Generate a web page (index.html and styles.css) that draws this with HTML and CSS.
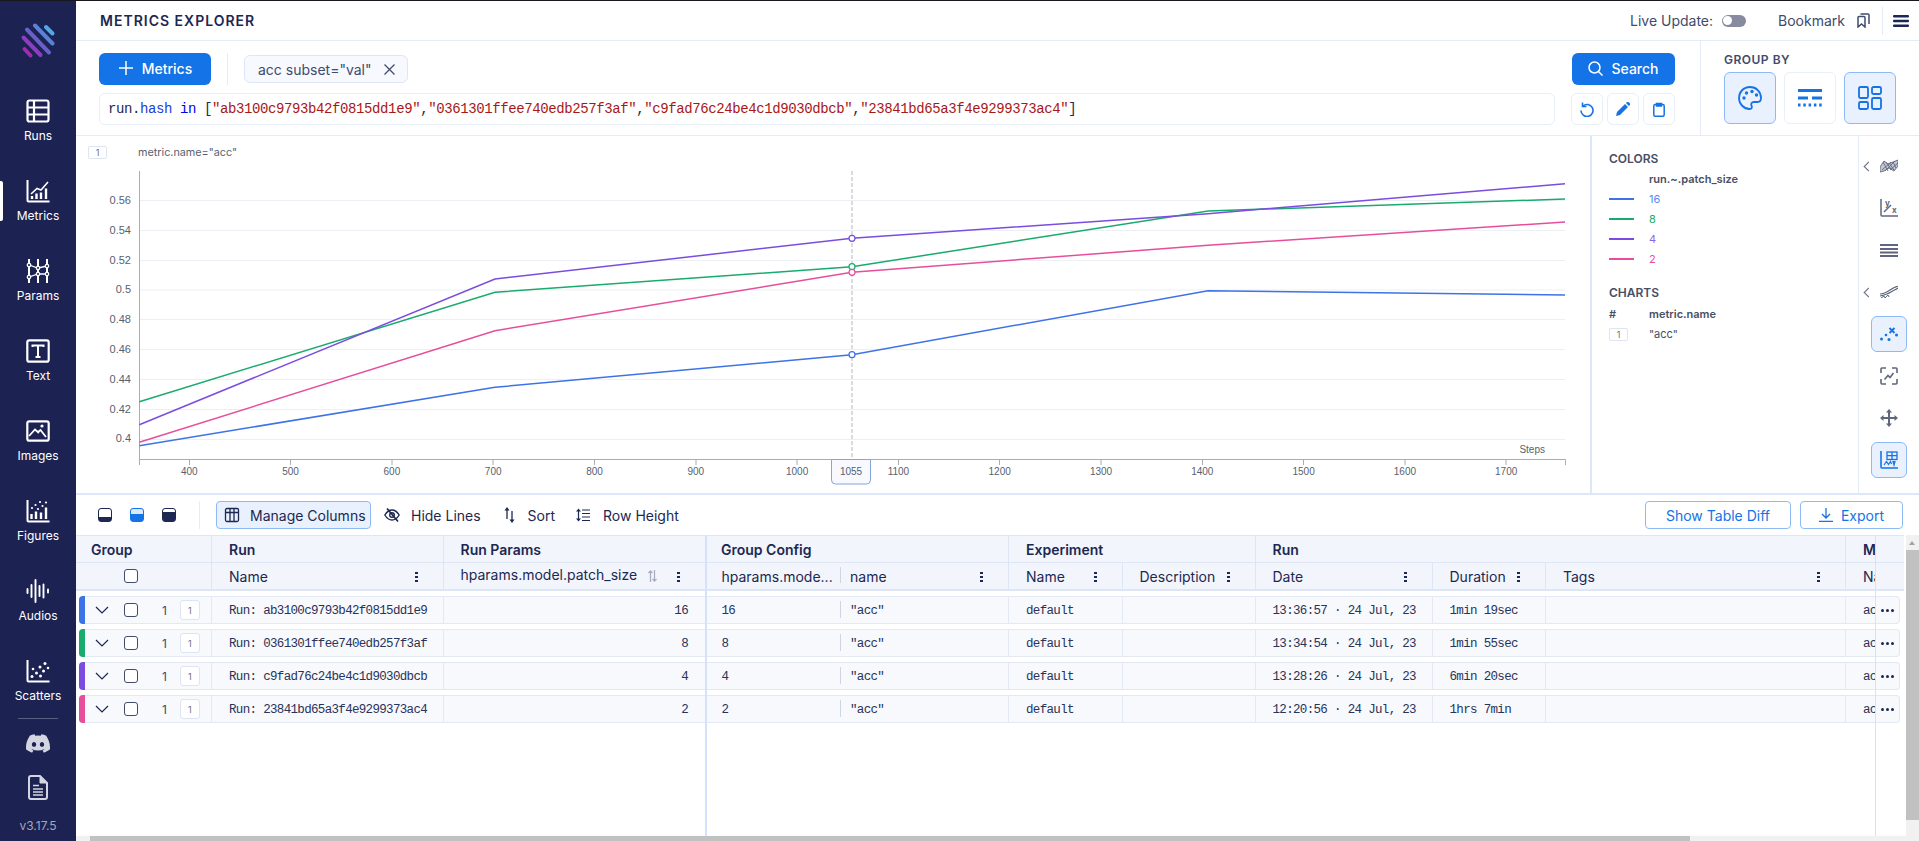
FILE: index.html
```html
<!DOCTYPE html>
<html lang="en">

<head>
  <meta charset="UTF-8">
  <title>Metrics Explorer</title>
  <link rel="stylesheet" href="styles.css">
</head>

<body>
  <div class="app">
    <nav class="sidebar">
      <svg class="logo" width="36" height="36" viewBox="0 0 36 36" fill="none" stroke-width="4" stroke-linecap="round">
        <path d="M26 4L32.500 10.500" stroke="#4fa8e8" />
        <path d="M15 2.500L32.500 20.500" stroke="#5a80d8" />
        <path d="M7 6.500L29 29.500" stroke="#6a5fc8" />
        <path d="M3.500 14.500L20.500 32" stroke="#8a3fc0" />
        <path d="M4.500 26L10.500 32.500" stroke="#a02ab0" />
      </svg>

      <a class="nav-item">
        <svg width="24" height="24" viewBox="0 0 24 24" fill="none" stroke="#fff" stroke-width="2.200">
          <rect x="1.500" y="1.500" width="21" height="21" rx="2" />
          <path d="M1.500 8.500H22.500M1.500 15.500H22.500M8 1.500V22.500" />
        </svg>
        <span>Runs</span>
      </a>
      <a class="nav-item active">
        <svg width="24" height="24" viewBox="0 0 24 24" fill="none" stroke="#fff" stroke-width="2">
          <path d="M1.500 1V21.500a1 1 0 0 0 1 1H23.500" />
          <path d="M5 15L11 9.500L15 11L22 3" stroke-width="1.600" />
          <path d="M6 20V17M10.500 20V14.500M15 20V13.500M20 20V9.500" stroke-width="2.400" />
        </svg>
        <span>Metrics</span>
      </a>
      <a class="nav-item">
        <svg width="24" height="24" viewBox="0 0 24 24" fill="none" stroke="#fff" stroke-width="1.800">
          <path d="M3 0V24M12 0V24M21 0V24" stroke-width="2" />
          <path d="M3 6L12 9L21 7M3 18L12 15L21 15" stroke-width="1.300" />
          <g fill="#1c2252" stroke-width="1.300">
            <circle cx="3" cy="6" r="1.700" />
            <circle cx="12" cy="9" r="1.700" />
            <circle cx="21" cy="7" r="1.700" />
            <circle cx="3" cy="18" r="1.700" />
            <circle cx="12" cy="15" r="1.700" />
            <circle cx="21" cy="15" r="1.700" />
          </g>
        </svg>
        <span>Params</span>
      </a>
      <a class="nav-item">
        <svg width="24" height="24" viewBox="0 0 24 24" fill="none" stroke="#fff">
          <rect x="1.300" y="1.300" width="21.400" height="21.400" rx="2" stroke-width="2.200" />
          <path d="M6.500 8V6.500H17.500V8M12 6.500V18M9.500 18H14.500" stroke-width="2" />
        </svg>
        <span>Text</span>
      </a>
      <a class="nav-item">
        <svg width="24" height="24" viewBox="0 0 24 24" fill="none" stroke="#fff">
          <rect x="1.300" y="2.300" width="21.400" height="19.400" rx="2" stroke-width="2.200" />
          <path d="M3 17L9 10.500L13 14M12 13L14.500 11L20 18" stroke-width="1.800" />
          <circle cx="16" cy="7" r="1.600" fill="#fff" stroke="none" />
        </svg>
        <span>Images</span>
      </a>
      <a class="nav-item">
        <svg width="24" height="24" viewBox="0 0 24 24" fill="none" stroke="#fff" stroke-width="2">
          <path d="M1.500 1V21.500a1 1 0 0 0 1 1H23.500" />
          <path d="M5.500 20V15M10 20V12.500M15 20V13.500M20 20V8.500" stroke-width="2.400" />
          <g fill="#fff" stroke="none">
            <circle cx="6" cy="9" r="1.100" />
            <circle cx="9.500" cy="6" r="1.100" />
            <circle cx="12" cy="10" r="1.100" />
            <circle cx="14" cy="3" r="1.100" />
            <circle cx="16.500" cy="7" r="1.100" />
            <circle cx="20" cy="3.500" r="1.100" />
          </g>
        </svg>
        <span>Figures</span>
      </a>
      <a class="nav-item">
        <svg width="24" height="24" viewBox="0 0 24 24" fill="none" stroke="#fff" stroke-width="1.900" stroke-linecap="round">
          <path d="M1.500 10V14M5.500 6V18M9.500 1V23M13.500 7V17M17.500 5.500V18.500M22 10.500V13.500" />
        </svg>
        <span>Audios</span>
      </a>
      <a class="nav-item">
        <svg width="24" height="24" viewBox="0 0 24 24" fill="none" stroke="#fff" stroke-width="2">
          <path d="M1.500 1V21.500a1 1 0 0 0 1 1H23.500" />
          <g fill="#fff" stroke="none">
            <circle cx="6" cy="17.500" r="1.500" />
            <circle cx="7" cy="10" r="1.300" />
            <circle cx="10.500" cy="14" r="1.500" />
            <circle cx="14" cy="8" r="1.500" />
            <circle cx="14.500" cy="17" r="1.500" />
            <circle cx="17.500" cy="12" r="1.500" />
            <circle cx="19" cy="4.500" r="1.500" />
            <circle cx="22" cy="9" r="1.300" />
          </g>
        </svg>
        <span>Scatters</span>
      </a>

      <div class="nav-line"></div>
      <svg class="nav-discord" width="24" height="19" viewBox="0 0 24 19" fill="#d3d6e0">
        <path transform="translate(0 -2.500)" d="M20.317 4.370a19.791 19.791 0 0 0-4.885-1.515.074.074 0 0 0-.079.037c-.21.375-.444.864-.608 1.250a18.270 18.270 0 0 0-5.487 0 12.640 12.640 0 0 0-.617-1.250.077.077 0 0 0-.079-.037A19.736 19.736 0 0 0 3.677 4.370a.070.070 0 0 0-.032.027C.533 9.046-.32 13.580.099 18.057a.082.082 0 0 0 .031.057 19.900 19.900 0 0 0 5.993 3.030.078.078 0 0 0 .084-.028 14.090 14.090 0 0 0 1.226-1.994.076.076 0 0 0-.041-.106 13.107 13.107 0 0 1-1.872-.892.077.077 0 0 1-.008-.128 10.200 10.200 0 0 0 .372-.292.074.074 0 0 1 .077-.01c3.928 1.793 8.180 1.793 12.062 0a.074.074 0 0 1 .078.01c.12.098.246.198.373.292a.077.077 0 0 1-.006.127 12.299 12.299 0 0 1-1.873.892.077.077 0 0 0-.041.107c.36.698.772 1.362 1.225 1.993a.076.076 0 0 0 .084.028 19.839 19.839 0 0 0 6.002-3.030.077.077 0 0 0 .032-.054c.5-5.177-.838-9.674-3.549-13.660a.061.061 0 0 0-.031-.03zM8.020 15.330c-1.183 0-2.157-1.085-2.157-2.419 0-1.333.956-2.419 2.157-2.419 1.210 0 2.176 1.096 2.157 2.420 0 1.333-.956 2.418-2.157 2.418zm7.975 0c-1.183 0-2.157-1.085-2.157-2.419 0-1.333.955-2.419 2.157-2.419 1.210 0 2.176 1.096 2.157 2.420 0 1.333-.946 2.418-2.157 2.418z" />
      </svg>
      <svg class="nav-doc" width="20" height="25" viewBox="0 0 20 25" fill="none" stroke="#d3d6e0">
        <path d="M3 1H12L19 8V22a2 2 0 0 1-2 2H3a2 2 0 0 1-2-2V3a2 2 0 0 1 2-2z" stroke-width="2" />
        <path d="M12 1V8H19" fill="#d3d6e0" stroke-width="1" />
        <path d="M5 10.500H11M5 14H15M5 17H15M5 20H15" stroke-width="1.500" />
      </svg>
      <span class="version">v3.17.5</span>
    </nav>

    <main class="main">
      <header class="topbar">
        <h1 class="page-title">Metrics Explorer</h1>
        <div class="topbar-right">
          <span class="live-label">Live Update:</span>
          <span class="toggle"><i></i></span>
          <span class="bookmark">Bookmark</span>
          <svg class="bookmark-icon" width="14" height="15" viewBox="0 0 14 15" fill="none" stroke="#414b6d" stroke-width="1.500">
            <path d="M2 14V4.500a1 1 0 0 1 1-1H8a1 1 0 0 1 1 1V14L5.500 11z" />
            <path d="M4.500 1H12a1 1 0 0 1 1 1V11" />
          </svg>
          <span class="topbar-line"></span>
          <svg width="16" height="12" viewBox="0 0 16 12" fill="#1c2852">
            <rect width="16" height="2.500" rx="1" />
            <rect y="4.700" width="16" height="2.500" rx="1" />
            <rect y="9.500" width="16" height="2.500" rx="1" />
          </svg>
        </div>
      </header>

      <section class="search-section">
        <div class="search-left">
          <div class="search-row">
            <button class="btn-primary metrics-btn">
              <svg width="16" height="16" viewBox="0 0 16 16" stroke="#fff" stroke-width="1.500">
                <path d="M8 1V15M1 8H15" />
              </svg>
              Metrics
            </button>
            <span class="search-line"></span>
            <span class="chip">acc subset="val"
              <svg width="11" height="11" viewBox="0 0 11 11" stroke="#414b6d" stroke-width="1.300">
                <path d="M.5 .5L10.500 10.500M10.500 .5L.5 10.500" />
              </svg>
            </span>
            <button class="btn-primary search-btn">
              <svg width="15" height="15" viewBox="0 0 15 15" fill="none" stroke="#fff" stroke-width="1.500">
                <circle cx="6.500" cy="6.500" r="5.500" />
                <path d="M10.500 10.500L14.500 14.500" />
              </svg>
              Search
            </button>
          </div>
          <div class="search-row">
            <div class="query"><code><span class="q-id">run</span>.<span class="q-prop">hash</span> <span class="q-kw">in</span> [<span class="q-str">"ab3100c9793b42f0815dd1e9"</span>,<span class="q-str">"0361301ffee740edb257f3af"</span>,<span class="q-str">"c9fad76c24be4c1d9030dbcb"</span>,<span class="q-str">"23841bd65a3f4e9299373ac4"</span>]</code></div>
            <div class="query-actions">
              <button class="icon-btn">
                <svg width="14" height="15" viewBox="0 0 14 15" fill="none" stroke="#1473e6" stroke-width="1.600">
                  <path d="M3 4A6 6 0 1 1 1 8.500" />
                  <path d="M2.500 .5V4.500H6.500" />
                </svg>
              </button>
              <button class="icon-btn">
                <svg width="14" height="14" viewBox="0 0 14 14" fill="#1473e6">
                  <path d="M0 14L1 10L9 2L12 5L4 13zM10 1L11 0a1 1 0 0 1 1.400 0L14 1.600a1 1 0 0 1 0 1.400L13 4z" />
                </svg>
              </button>
              <button class="icon-btn">
                <svg width="12" height="15" viewBox="0 0 12 15" fill="none" stroke="#1473e6" stroke-width="1.500">
                  <rect x=".8" y="2.500" width="10.400" height="11.700" rx="1.500" />
                  <path d="M3.500 1.500H8.500V4H3.500z" fill="#1473e6" />
                </svg>
              </button>
            </div>
          </div>
        </div>
        <div class="group-by">
          <h3 class="group-title">Group by</h3>
          <div class="group-btns">
            <button class="group-btn active">
              <svg width="24" height="24" viewBox="0 0 24 24" fill="none" stroke="#1473e6" stroke-width="1.800">
                <path d="M12 1C5.500 1 1 6 1 12s5 11 10.500 11c2.500 0 2.800-2 2-3.500-.8-1.700 0-3.500 2.500-3.500h3.500c2 0 3.500-1.500 3.500-4C23 5.500 18 1 12 1z" />
                <g fill="#1473e6" stroke="none">
                  <circle cx="6" cy="12" r="1.700" />
                  <circle cx="8.500" cy="7" r="1.700" />
                  <circle cx="14" cy="5.500" r="1.700" />
                  <circle cx="18.500" cy="9" r="1.700" />
                </g>
              </svg>
            </button>
            <button class="group-btn">
              <svg width="24" height="18" viewBox="0 0 24 18" fill="none" stroke="#1473e6">
                <path d="M0 1.500H24" stroke-width="3" />
                <path d="M0 9H10M14 9H24" stroke-width="3" />
                <path d="M0 16H24" stroke-width="3" stroke-dasharray="2.500 2.800" />
              </svg>
            </button>
            <button class="group-btn active">
              <svg width="24" height="24" viewBox="0 0 24 24" fill="none" stroke="#1473e6" stroke-width="1.800">
                <rect x="1" y="1" width="9" height="11" rx="1.500" />
                <rect x="14" y="1" width="9" height="7" rx="1.500" />
                <rect x="1" y="16" width="9" height="7" rx="1.500" />
                <rect x="14" y="12" width="9" height="11" rx="1.500" />
              </svg>
            </button>
          </div>
        </div>
      </section>

      <section class="chart-section">
        <div class="chart-box">
          <svg class="chart" width="1514" height="357" viewBox="0 0 1514 357">
            <rect class="tag-box" x="12.500" y="10.500" width="18" height="12" rx="1.500" />
            <text class="tag-text" x="21.500" y="20" text-anchor="middle">1</text>
            <text class="chart-title" x="62" y="20">metric.name="acc"</text>

            <g class="grid">
              <path d="M63 64.500H1489M63 94.500H1489M63 124.500H1489M63 154H1489M63 183.500H1489M63 213.500H1489M63 243.500H1489M63 273.500H1489M63 303.500H1489" />
            </g>
            <path class="axis" d="M63.500 35V323.500H1489.500V329M63.500 323.500V329" />
            <path class="axis" d="M113.500 323V329M214.500 323V329M316 323V329M417 323V329M518.500 323V329M620 323V329M721 323V329M822.500 323V329M923.500 323V329M1025 323V329M1126.500 323V329M1227.500 323V329M1329 323V329M1430 323V329" />

            <g class="y-labels" text-anchor="end">
              <text x="55" y="68">0.56</text>
              <text x="55" y="98">0.54</text>
              <text x="55" y="128">0.52</text>
              <text x="55" y="157">0.5</text>
              <text x="55" y="187">0.48</text>
              <text x="55" y="217">0.46</text>
              <text x="55" y="247">0.44</text>
              <text x="55" y="277">0.42</text>
              <text x="55" y="306">0.4</text>
            </g>
            <g class="x-labels" text-anchor="middle">
              <text x="113.300" y="339">400</text>
              <text x="214.600" y="339">500</text>
              <text x="315.900" y="339">600</text>
              <text x="417.200" y="339">700</text>
              <text x="518.500" y="339">800</text>
              <text x="619.800" y="339">900</text>
              <text x="721.100" y="339">1000</text>
              <text x="822.400" y="339">1100</text>
              <text x="923.700" y="339">1200</text>
              <text x="1025" y="339">1300</text>
              <text x="1126.300" y="339">1400</text>
              <text x="1227.600" y="339">1500</text>
              <text x="1328.900" y="339">1600</text>
              <text x="1430.200" y="339">1700</text>
            </g>
            <text class="x-labels" x="1469" y="317" text-anchor="end">Steps</text>

            <g class="lines">
              <polyline stroke="#3e72e7" points="63.300,309.700 419,251.300 776,218.700 1132,154.700 1489,159" />
              <polyline stroke="#18ab6d" points="63.300,265.700 419,156.300 776,130.700 1132,75 1489,63" />
              <polyline stroke="#7a4ce0" points="63.300,288.700 419,143 776,102.300 1132,77.700 1489,47.700" />
              <polyline stroke="#e64e9c" points="63.300,306.300 419,194.700 776,136.300 1132,109.300 1489,86" />
            </g>

            <path class="hover-line" d="M776 35V323" />
            <g class="dots">
              <circle cx="776" cy="218.700" r="3" stroke="#3e72e7" />
              <circle cx="776" cy="130.700" r="3" stroke="#18ab6d" />
              <circle cx="776" cy="102.300" r="3" stroke="#7a4ce0" />
              <circle cx="776" cy="136.300" r="3" stroke="#e64e9c" />
            </g>

            <path class="hover-chip" d="M755.500 323.500H794.500V344a4 4 0 0 1-4 4H759.500a4 4 0 0 1-4-4z" />
            <text class="x-labels" x="775" y="339" text-anchor="middle">1055</text>
          </svg>
        </div>

        <aside class="legend">
          <h4 class="legend-title">Colors</h4>
          <div class="legend-head">run.~.patch_size</div>
          <div class="legend-row c-blue"><i></i>16</div>
          <div class="legend-row c-green"><i></i>8</div>
          <div class="legend-row c-purple"><i></i>4</div>
          <div class="legend-row c-pink"><i></i>2</div>
          <h4 class="legend-title charts-title">Charts</h4>
          <div class="legend-charts"><b>#</b><b>metric.name</b></div>
          <div class="legend-charts"><span class="tag">1</span><span class="legend-val">"acc"</span></div>
        </aside>

        <div class="controls">
          <div class="control has-arrow">
            <svg width="18" height="14" viewBox="0 0 18 14" fill="none" stroke="#5f667d" stroke-width=".9">
              <path d="M0 8L4 2L8 5L13 3L18 1V7L14 12L9 9L4 12L0 13z" fill="#c3c6d2" />
              <path d="M3 3L8 12M6 3L11 10M9 4L14 11M13 3L16 9M15 2L5 12M11 3L2 11M18 4L10 11" />
            </svg>
          </div>
          <div class="control">
            <svg width="18" height="18" viewBox="0 0 18 18" fill="none" stroke="#5f667d" stroke-width="1.500">
              <path d="M1 0V16a1 1 0 0 0 1 1H18" />
              <path d="M4 13L11 6" />
              <text class="axis-letter" x="5" y="7">y</text>
              <text class="axis-letter" x="12" y="14">x</text>
            </svg>
          </div>
          <div class="control">
            <svg width="18" height="14" viewBox="0 0 18 14" stroke="#5f667d" stroke-width="2.200">
              <path d="M0 2H18M0 6H18M0 9.500H18M0 13H18" />
            </svg>
          </div>
          <div class="control has-arrow">
            <svg width="18" height="12" viewBox="0 0 18 12" fill="none" stroke="#5f667d" stroke-width="1.200">
              <path d="M0 8C4 8 7 6 10 4S15 1 18 0" />
              <path d="M0 10C5 9 8 8 11 6S15 4 18 2" />
              <path d="M1 12L4 10L5 12L8 9L9 11" stroke-width="1" />
            </svg>
          </div>
          <div class="control active">
            <svg width="18" height="14" viewBox="0 0 18 14" fill="#1473e6">
              <circle cx="1.500" cy="12" r="1.500" />
              <circle cx="9" cy="12.500" r="1.500" />
              <circle cx="6" cy="8" r="1.300" />
              <circle cx="16.500" cy="8" r="1.500" />
              <path d="M9.500 1L14.500 6M14.500 1L9.500 6" stroke="#1473e6" stroke-width="1.800" />
            </svg>
          </div>
          <div class="control">
            <svg width="18" height="18" viewBox="0 0 18 18" fill="none" stroke="#5f667d" stroke-width="1.600">
              <path d="M1 6V2a1 1 0 0 1 1-1H6M12 1H16a1 1 0 0 1 1 1V6M17 12V16a1 1 0 0 1-1 1H12M6 17H2a1 1 0 0 1-1-1V12" />
              <path d="M4.500 12.500L8 8.500L10 10.500L13.500 6" />
            </svg>
          </div>
          <div class="control">
            <svg width="18" height="18" viewBox="0 0 18 18" fill="#5f667d" stroke="#5f667d" stroke-width="2">
              <path d="M9 2V16M2 9H16" />
              <path d="M9 0L12 3.500H6zM9 18L12 14.500H6zM0 9L3.500 6V12zM18 9L14.500 6V12z" stroke="none" />
            </svg>
          </div>
          <div class="control active">
            <svg width="18" height="18" viewBox="0 0 18 18" fill="none" stroke="#1473e6" stroke-width="1.300">
              <path d="M1 0V16a1 1 0 0 0 1 1H18" stroke-width="1.600" />
              <rect x="7" y="1" width="10" height="7.500" />
              <path d="M7 4.700H17M12 1V8.500" />
              <path d="M4 14L6.500 10.500L8.500 13.500L10.500 10.500L11.500 13M13 10.500L15 10.500L14 14z" stroke-width="1.200" />
            </svg>
          </div>
        </div>
      </section>

      <div class="table-toolbar">
        <div class="view-btns">
          <span class="view-icon view-low"></span>
          <span class="view-icon view-mid"></span>
          <span class="view-icon view-high"></span>
        </div>
        <span class="toolbar-line"></span>
        <button class="tool-btn active manage-btn">
          <svg width="16" height="16" viewBox="0 0 16 16" fill="none" stroke="#1c2852" stroke-width="1.300">
            <rect x="1.500" y="1.500" width="13" height="13" rx="1.500" />
            <path d="M1.500 5.500H14.500M6 1.500V14.500M10 1.500V14.500" />
          </svg>
          Manage Columns
        </button>
        <button class="tool-btn hide-btn">
          <svg width="16" height="16" viewBox="0 0 16 16" fill="none" stroke="#1c2852" stroke-width="1.400">
            <path d="M.8 8C3 4.500 5.500 3 8 3s5 1.500 7.200 5C13 11.500 10.500 13 8 13S3 11.500 .8 8z" />
            <circle cx="8" cy="8" r="2.300" />
            <path d="M3 1.500L14 14.500" stroke-width="1.700" />
          </svg>
          Hide Lines
        </button>
        <button class="tool-btn sort-btn">
          <svg width="11" height="16" viewBox="0 0 11 16" fill="#1c2852" stroke="#1c2852" stroke-width="1.300">
            <path d="M3 3V12M8 4V14" />
            <path d="M3 0L5.500 3.500H.5zM8 16L10.500 12.500H5.500z" stroke="none" />
          </svg>
          Sort
        </button>
        <button class="tool-btn height-btn">
          <svg width="14" height="14" viewBox="0 0 14 14" fill="#1c2852" stroke="#1c2852" stroke-width="1.200">
            <path d="M2.500 3V11M6 2H14M6 5.500H14M6 9H14M6 12.500H14" />
            <path d="M2.500 .5L5 3.500H0zM2.500 13.500L5 10.500H0z" stroke="none" />
          </svg>
          Row Height
        </button>
        <button class="outline-btn diff-btn">Show Table Diff</button>
        <button class="outline-btn export-btn">
          <svg width="14" height="14" viewBox="0 0 14 14" fill="none" stroke="#1473e6" stroke-width="1.300">
            <path d="M7 0V9.500M3 6L7 10L11 6M0 13.300H14" />
          </svg>
          Export
        </button>
      </div>

      <div class="table-wrap">
        <div class="thead">
          <div class="thead-row thead-groups">
            <div class="th w-group">Group</div>
            <div class="th w-name">Run</div>
            <div class="th w-patch">Run Params</div>
            <div class="th w-config">Group Config</div>
            <div class="th w-experiment">Experiment</div>
            <div class="th w-runinfo">Run</div>
            <div class="th w-metric"><span>Metric</span></div>
          </div>
          <div class="thead-row thead-cols">
            <div class="tc w-group"><span class="check head-check"></span></div>
            <div class="tc w-name"><span class="tc-label">Name</span><i class="dots-v"></i></div>
            <div class="tc w-patch">
              <span class="tc-label patch-label">hparams.model.patch_size</span>
              <svg class="sort-icon" width="9" height="12" viewBox="0 0 9 12" fill="none" stroke="#a8aebd" stroke-width="1.300">
                <path d="M2.500 12V1M.5 3L2.500 1L4.500 3M6.500 0V11M4.500 9L6.500 11L8.500 9" />
              </svg>
              <i class="dots-v"></i>
            </div>
            <div class="tc w-hp"><span class="tc-label">hparams.mode...</span></div>
            <div class="tc w-gname"><span class="short-line"></span><span class="tc-label">name</span><i class="dots-v"></i></div>
            <div class="tc w-expname"><span class="tc-label">Name</span><i class="dots-v"></i></div>
            <div class="tc w-desc"><span class="tc-label">Description</span><i class="dots-v"></i></div>
            <div class="tc w-date"><span class="tc-label">Date</span><i class="dots-v"></i></div>
            <div class="tc w-duration"><span class="tc-label">Duration</span><i class="dots-v"></i></div>
            <div class="tc w-tags"><span class="tc-label">Tags</span><i class="dots-v"></i></div>
            <div class="tc w-metric"><span>Name</span></div>
          </div>
        </div>

        <div class="tbody">
          <div class="row">
            <div class="td first-cell"><i class="bar bg-blue"></i><svg class="chevron" width="14" height="8" viewBox="0 0 14 8" fill="none" stroke="#1c2852" stroke-width="1.200"><path d="M1 1L7 7L13 1" /></svg><span class="check"></span><span class="count">1</span><span class="tag tag-big">1</span></div>
            <div class="td rw-name">Run: ab3100c9793b42f0815dd1e9</div>
            <div class="td w-patch num">16</div>
            <div class="td w-hp">16</div>
            <div class="td w-gname"><span class="short-line"></span>"acc"</div>
            <div class="td w-expname">default</div>
            <div class="td w-desc"></div>
            <div class="td w-date">13:36:57 · 24 Jul, 23</div>
            <div class="td w-duration">1min 19sec</div>
            <div class="td w-tags"></div>
            <div class="td rw-metric"><span>acc</span></div>
            <div class="more"><i></i><i></i><i></i></div>
          </div>
          <div class="row">
            <div class="td first-cell"><i class="bar bg-green"></i><svg class="chevron" width="14" height="8" viewBox="0 0 14 8" fill="none" stroke="#1c2852" stroke-width="1.200"><path d="M1 1L7 7L13 1" /></svg><span class="check"></span><span class="count">1</span><span class="tag tag-big">1</span></div>
            <div class="td rw-name">Run: 0361301ffee740edb257f3af</div>
            <div class="td w-patch num">8</div>
            <div class="td w-hp">8</div>
            <div class="td w-gname"><span class="short-line"></span>"acc"</div>
            <div class="td w-expname">default</div>
            <div class="td w-desc"></div>
            <div class="td w-date">13:34:54 · 24 Jul, 23</div>
            <div class="td w-duration">1min 55sec</div>
            <div class="td w-tags"></div>
            <div class="td rw-metric"><span>acc</span></div>
            <div class="more"><i></i><i></i><i></i></div>
          </div>
          <div class="row">
            <div class="td first-cell"><i class="bar bg-purple"></i><svg class="chevron" width="14" height="8" viewBox="0 0 14 8" fill="none" stroke="#1c2852" stroke-width="1.200"><path d="M1 1L7 7L13 1" /></svg><span class="check"></span><span class="count">1</span><span class="tag tag-big">1</span></div>
            <div class="td rw-name">Run: c9fad76c24be4c1d9030dbcb</div>
            <div class="td w-patch num">4</div>
            <div class="td w-hp">4</div>
            <div class="td w-gname"><span class="short-line"></span>"acc"</div>
            <div class="td w-expname">default</div>
            <div class="td w-desc"></div>
            <div class="td w-date">13:28:26 · 24 Jul, 23</div>
            <div class="td w-duration">6min 20sec</div>
            <div class="td w-tags"></div>
            <div class="td rw-metric"><span>acc</span></div>
            <div class="more"><i></i><i></i><i></i></div>
          </div>
          <div class="row">
            <div class="td first-cell"><i class="bar bg-pink"></i><svg class="chevron" width="14" height="8" viewBox="0 0 14 8" fill="none" stroke="#1c2852" stroke-width="1.200"><path d="M1 1L7 7L13 1" /></svg><span class="check"></span><span class="count">1</span><span class="tag tag-big">1</span></div>
            <div class="td rw-name">Run: 23841bd65a3f4e9299373ac4</div>
            <div class="td w-patch num">2</div>
            <div class="td w-hp">2</div>
            <div class="td w-gname"><span class="short-line"></span>"acc"</div>
            <div class="td w-expname">default</div>
            <div class="td w-desc"></div>
            <div class="td w-date">12:20:56 · 24 Jul, 23</div>
            <div class="td w-duration">1hrs 7min</div>
            <div class="td w-tags"></div>
            <div class="td rw-metric"><span>acc</span></div>
            <div class="more"><i></i><i></i><i></i></div>
          </div>
        </div>

        <span class="pin-line pin-left"></span>
        <span class="pin-line pin-right"></span>
        <div class="scroll-v"><i></i></div>
        <div class="scroll-h"><i></i></div>
      </div>
    </main>
  </div>
</body>

</html>
```

FILE: styles.css
```css
* {
  box-sizing: border-box;
}

html,
body {
  margin: 0;
  height: 841px;
  overflow: hidden;
}

body {
  border-top: 1px solid #16181d;
  font-family: "Inter", "Liberation Sans", sans-serif;
  color: #1c2852;
  background: #fff;
}

button {
  font-family: inherit;
  cursor: pointer;
}

.app {
  display: flex;
  height: 840px;
}

/* sidebar */
.sidebar {
  width: 76px;
  flex: none;
  background: #1c2252;
  display: flex;
  flex-direction: column;
  align-items: center;
  padding-top: 22px;
}

.logo {
  margin-bottom: 40px;
}

.nav-item {
  position: relative;
  width: 100%;
  height: 44px;
  margin-bottom: 36px;
  display: flex;
  flex-direction: column;
  align-items: center;
  gap: 5px;
  color: #fff;
  font-size: 12px;
  line-height: 15px;
}

.nav-item.active::before {
  content: "";
  position: absolute;
  left: 0;
  top: 2px;
  width: 3px;
  height: 40px;
  background: #fff;
  border-radius: 0 2px 2px 0;
}

.nav-line {
  width: 40px;
  height: 1px;
  flex: none;
  background: #5b6082;
  margin-top: -21px;
}

.nav-discord {
  margin-top: 15px;
}

.nav-doc {
  margin-top: 22px;
}

.version {
  margin-top: 18px;
  font-size: 12px;
  color: #a3a7bb;
}

/* top bar */
.main {
  flex: 1;
  min-width: 0;
  display: flex;
  flex-direction: column;
}

.topbar {
  height: 40px;
  flex: none;
  display: flex;
  align-items: center;
  justify-content: space-between;
  padding: 0 10px 0 24px;
  border-bottom: 1px solid #e4ecf9;
}

.page-title {
  margin: 0;
  font-size: 14px;
  font-weight: 600;
  letter-spacing: 1px;
  text-transform: uppercase;
  color: #1c2852;
}

.topbar-right {
  display: flex;
  align-items: center;
  font-size: 14px;
  color: #414b6d;
}

.toggle {
  width: 24px;
  height: 12px;
  margin-left: 9px;
  border-radius: 6px;
  background: #868b9f;
  display: flex;
  align-items: center;
  padding-left: 1px;
}

.toggle i {
  width: 9px;
  height: 9px;
  border-radius: 50%;
  background: #fff;
}

.bookmark {
  margin-left: 32px;
  margin-top: -1px;
}

.bookmark-icon {
  margin-left: 11px;
}

.topbar-line {
  width: 1px;
  height: 28px;
  margin: 0 10px 0 12px;
  background: #e4ecf9;
}

/* search */
.search-section {
  height: 95px;
  flex: none;
  display: flex;
  border-bottom: 1px solid #e4ecf9;
}

.search-left {
  width: 1624px;
  padding: 12px 25px 0 23px;
  display: flex;
  flex-direction: column;
  gap: 8px;
}

.search-row {
  display: flex;
  align-items: center;
}

.btn-primary {
  height: 32px;
  padding: 0 0 2px;
  border: 0;
  border-radius: 6px;
  background: #1473e6;
  color: #fff;
  font-size: 14px;
  font-weight: 500;
  display: flex;
  align-items: center;
  justify-content: center;
  gap: 8px;
}

.metrics-btn {
  width: 112px;
}

.search-line {
  width: 1px;
  height: 32px;
  margin: 0 16px;
  background: #e4ecf9;
}

.chip {
  height: 28px;
  width: 164px;
  padding: 0 12px 0 13px;
  display: flex;
  align-items: center;
  justify-content: space-between;
  border: 1px solid #dde7f8;
  border-radius: 6px;
  background: #f7f9fe;
  font-size: 14px;
  color: #414b6d;
}

.search-btn {
  width: 103px;
  margin-left: auto;
}

.query {
  flex: 1;
  height: 32px;
  margin-right: 16px;
  padding-left: 8px;
  display: flex;
  align-items: center;
  border: 1px solid #e8eff9;
  border-radius: 6px;
}

.query code {
  font-family: "Liberation Mono", monospace;
  font-size: 14px;
  letter-spacing: -0.4px;
  white-space: pre;
  color: #1c2852;
}

.q-prop {
  color: #1a40d8;
}

.q-kw {
  color: #0000f0;
}

.q-str {
  color: #a81818;
}

.query-actions {
  display: flex;
  gap: 4px;
}

.icon-btn {
  width: 32px;
  height: 32px;
  padding: 0;
  border: 1px solid #e8eff9;
  border-radius: 6px;
  background: #fff;
  display: flex;
  align-items: center;
  justify-content: center;
}

.group-by {
  flex: 1;
  border-left: 1px solid #e4ecf9;
  padding: 12px 0 0 23px;
}

.group-title {
  margin: 0 0 5px;
  font-size: 12px;
  line-height: 14px;
  font-weight: 600;
  letter-spacing: 0.5px;
  text-transform: uppercase;
  color: #414b6d;
}

.group-btns {
  display: flex;
  gap: 8px;
}

.group-btn {
  width: 52px;
  height: 52px;
  padding: 0;
  border: 1px solid #e8eff9;
  border-radius: 6px;
  background: #fff;
  display: flex;
  align-items: center;
  justify-content: center;
}

.group-btn.active {
  background: #e8f1fd;
  border-color: #8dbaf5;
}

/* chart */
.chart-section {
  height: 359px;
  flex: none;
  display: flex;
  border-bottom: 2px solid #dce8fa;
}

.chart-box {
  width: 1516px;
  flex: none;
  border-right: 2px solid #dce8fa;
}

.chart {
  display: block;
  font-family: "Inter", sans-serif;
}

.tag-box {
  fill: #fff;
  stroke: #dde5f3;
}

.tag-text {
  font-size: 9px;
  fill: #6a7086;
}

.chart-title {
  font-size: 10.800px;
  fill: #585f70;
}

.grid path {
  stroke: #eceff4;
  fill: none;
}

.axis {
  stroke: #a9acb8;
  fill: none;
}

.y-labels text,
.x-labels text,
text.x-labels {
  font-family: "Liberation Sans", sans-serif;
  font-size: 10px;
  fill: #585f70;
}

.y-labels text {
  font-size: 11px;
}

.lines polyline {
  fill: none;
  stroke-width: 1.500;
}

.hover-line {
  stroke: #b5b8bf;
  stroke-dasharray: 4 2;
  fill: none;
}

.dots circle {
  fill: #fff;
  stroke-width: 1.200;
}

.hover-chip {
  fill: #f7f9fe;
  stroke: #84a6dc;
}

.legend {
  width: 267px;
  flex: none;
  border-right: 1px solid #e4ecf9;
  padding: 15px 0 0 17px;
  font-size: 11px;
  color: #414b6d;
}

.legend-title {
  margin: 0;
  font-size: 12px;
  line-height: 16px;
  font-weight: 600;
  text-transform: uppercase;
  color: #484e63;
}

.legend-head {
  height: 20px;
  margin: 2px 0 0 40px;
  font-weight: 600;
  line-height: 20px;
  color: #484e63;
}

.legend-row {
  height: 20px;
  display: flex;
  align-items: center;
  gap: 15px;
}

.legend-row i {
  width: 25px;
  height: 2px;
}

.c-blue {
  color: #5b8af0;
}

.c-green {
  color: #18ab6d;
}

.c-purple {
  color: #8e63ea;
}

.c-pink {
  color: #e64e9c;
}

.c-blue i,
.bg-blue {
  background: #3e72e7;
}

.c-green i,
.bg-green {
  background: #18ab6d;
}

.c-purple i,
.bg-purple {
  background: #7a4ce0;
}

.c-pink i,
.bg-pink {
  background: #e64e9c;
}

.charts-title {
  margin-top: 16px;
}

.legend-charts {
  height: 20px;
  margin-top: 3px;
  display: flex;
  align-items: center;
  color: #484e63;
}

.legend-charts:last-child {
  margin-top: 0;
}

.legend-charts > :first-child {
  width: 40px;
}

.legend-charts b {
  font-weight: 600;
}

.legend-val {
  margin-left: 21px;
}

.tag {
  width: 19px !important;
  height: 13px;
  display: flex;
  align-items: center;
  justify-content: center;
  border: 1px solid #dde5f3;
  border-radius: 2px;
  font-size: 9px;
  color: #6a7086;
}

.controls {
  flex: 1;
  padding-top: 12px;
  display: flex;
  flex-direction: column;
  align-items: center;
  gap: 6px;
}

.control {
  position: relative;
  width: 36px;
  height: 36px;
  flex: none;
  display: flex;
  align-items: center;
  justify-content: center;
  border: 1px solid transparent;
  border-radius: 6px;
}

.control.active {
  background: #e8f1fd;
  border-color: #8dbaf5;
}

.control.has-arrow::before {
  content: "";
  position: absolute;
  left: -7px;
  top: 14px;
  width: 6px;
  height: 6px;
  border-left: 1.300px solid #5f667d;
  border-bottom: 1.300px solid #5f667d;
  transform: rotate(45deg);
}

.axis-letter {
  font-size: 8px;
  font-weight: 700;
  fill: #5f667d;
  stroke: none;
}

/* table toolbar */
.table-toolbar {
  height: 40px;
  flex: none;
  display: flex;
  align-items: center;
  padding: 0 16px 0 22px;
}

.view-btns {
  display: flex;
  gap: 18px;
}

.view-icon {
  width: 14px;
  height: 14px;
  border: 1.500px solid #1c2852;
  border-radius: 3px;
  background: #fff;
}

.view-low {
  background: linear-gradient(#fff 70%, #1c2852 70%);
}

.view-mid {
  border-color: #1473e6;
  background: linear-gradient(#dbe9fb 45%, #1473e6 45%);
}

.view-high {
  background: linear-gradient(#fff 25%, #1c2852 25%);
}

.toolbar-line {
  width: 1px;
  height: 28px;
  margin: 0 16px 0 23px;
  background: #e4ecf9;
}

.tool-btn {
  height: 28px;
  padding: 0 7px;
  display: flex;
  align-items: center;
  gap: 11px;
  border: 1px solid transparent;
  border-radius: 4px;
  background: none;
  font-size: 14px;
  font-weight: 400;
  white-space: nowrap;
  color: #1c2852;
}

.tool-btn.active {
  background: #e8f1fd;
  border-color: #8dbaf5;
}

.manage-btn {
  width: 155px;
  gap: 10px;
  padding-right: 0;
}

.hide-btn {
  margin-left: 5px;
}

.sort-btn {
  margin-left: 7px;
  gap: 13px;
}

.height-btn {
  margin-left: 5px;
  gap: 13px;
}

.outline-btn {
  height: 28px;
  border: 1px solid #8dbaf5;
  border-radius: 4px;
  background: #fff;
  color: #1473e6;
  font-size: 14px;
  display: flex;
  align-items: center;
  justify-content: center;
  gap: 8px;
}

.diff-btn {
  width: 146px;
  margin-left: auto;
  margin-right: 9px;
}

.export-btn {
  width: 103px;
}

/* table */
.table-wrap {
  position: relative;
  flex: 1;
  overflow: hidden;
  font-size: 14px;
}

.thead {
  width: 1828px;
  background: #f2f5fb;
  border-top: 1px solid #dfe6f3;
}

.thead-row {
  display: flex;
  border-bottom: 1px solid #dfe6f3;
}

.thead-groups {
  height: 27px;
}

.thead-cols {
  height: 28px;
  border-bottom-width: 2px;
}

.th,
.tc {
  flex: none;
  display: flex;
  align-items: center;
  padding-left: 17px;
  border-right: 1px solid #dfe6f3;
  white-space: nowrap;
}

.th {
  font-weight: 600;
}

.tc {
  position: relative;
  padding-right: 10px;
  justify-content: space-between;
  font-weight: 400;
}

.th.w-group {
  padding-left: 15px;
}

.th.w-config {
  padding-left: 15px;
}

.w-group {
  width: 136px;
}

.w-name {
  width: 231.500px;
}

.w-patch {
  width: 262.500px;
}

.w-config {
  width: 303px;
}

.w-experiment {
  width: 246.500px;
}

.w-runinfo {
  width: 590.500px;
}

.w-hp {
  width: 134px;
  border-right: 0 !important;
}

.w-gname {
  width: 169px;
  padding-left: 10px !important;
  position: relative;
}

.w-expname {
  width: 113.500px;
}

.w-desc {
  width: 133px;
}

.w-date {
  width: 177px;
}

.w-duration {
  width: 113.500px;
}

.w-tags {
  width: 300px;
}

.w-metric {
  width: 58px;
  border-right: 0;
}

.w-metric span {
  display: block;
  width: 12px;
  overflow: hidden;
}

.tc.w-hp {
  padding-left: 15.500px;
}

.tc.w-group {
  justify-content: flex-start;
  padding-left: 48px;
}

.patch-label {
  margin-top: -4px;
}

.sort-icon {
  margin-left: auto;
  margin-right: 20px;
}

.short-line {
  position: absolute;
  left: 0;
  top: 4px;
  bottom: 6px;
  width: 1px;
  background: #cfd6e3;
}

.dots-v {
  width: 3px;
  height: 11px;
  flex: none;
  margin-right: 15px;
  background: radial-gradient(circle 1.400px at center, #1c2852 98%, transparent) 0 0 / 3px 4px;
}

.tbody {
  padding: 5px 0 0 3px;
  display: flex;
  flex-direction: column;
  gap: 5px;
}

.row {
  width: 1821px;
  height: 28px;
  display: flex;
  border: 1px solid #e3e9f4;
  border-left: 0;
  border-radius: 4px;
  background: #f7f9fd;
  font-family: "Liberation Mono", monospace;
  font-size: 12.500px;
  letter-spacing: -0.67px;
  color: #2a3358;
}

.td {
  position: relative;
  flex: none;
  display: flex;
  align-items: center;
  padding-top: 1px;
  padding-left: 17px;
  border-right: 1px solid #e3e9f4;
  white-space: pre;
}

.first-cell {
  width: 133px;
  padding-left: 16px;
  padding-top: 0;
  letter-spacing: 0;
}

.bar {
  position: absolute;
  left: 0;
  top: -1px;
  bottom: -1px;
  width: 6px;
  border-radius: 4px 0 0 4px;
}

.chevron {
  flex: none;
}

.check {
  width: 14px;
  height: 14px;
  flex: none;
  border: 1.300px solid #414b6d;
  border-radius: 3px;
  background: #fff;
  margin-left: 15px;
}

.head-check {
  margin-left: 0;
}

.count {
  margin-left: 24px;
  font-family: "Inter", sans-serif;
  font-size: 12px;
  color: #414b6d;
}

.tag-big {
  width: 20px !important;
  height: 20px;
  margin-left: 13px;
  border-radius: 3px;
  background: #fff;
  font-family: "Inter", sans-serif;
}

.rw-name {
  width: 231.500px;
}

.num {
  justify-content: flex-end;
  padding: 1px 17px 0 0;
}

.td.w-hp {
  padding-left: 15.500px;
}

.td.w-gname .short-line {
  top: 4px;
  bottom: 5px;
}

.rw-metric {
  width: 29px;
  border-right: 0;
  overflow: hidden;
  padding-right: 0;
}

.rw-metric span {
  overflow: hidden;
}

.more {
  flex: 1;
  display: flex;
  align-items: center;
  gap: 2px;
  padding-left: 6px;
}

.more i {
  width: 3px;
  height: 3px;
  border-radius: 50%;
  background: #1c2852;
}

.pin-line {
  position: absolute;
  top: 0;
  bottom: 5px;
  background: #d4e3f9;
}

.pin-left {
  left: 629px;
  width: 2px;
}

.pin-right {
  left: 1799px;
  width: 1px;
}

.scroll-v {
  position: absolute;
  top: 0;
  right: 0;
  bottom: 0;
  width: 13px;
  background: #f1f1f1;
  padding-top: 15px;
}

.scroll-v::before {
  content: "";
  position: absolute;
  left: 3px;
  top: 6px;
  border-left: 3.500px solid transparent;
  border-right: 3.500px solid transparent;
  border-bottom: 4px solid #a3a3a3;
}

.scroll-v i {
  display: block;
  height: 270px;
  background: #c1c1c1;
}

.scroll-h {
  position: absolute;
  left: 0;
  right: 13px;
  bottom: 0;
  height: 5px;
  background: #f1f1f1;
  padding-left: 14px;
}

.scroll-h i {
  display: block;
  height: 5px;
  width: 1600px;
  background: #c1c1c1;
}
```
